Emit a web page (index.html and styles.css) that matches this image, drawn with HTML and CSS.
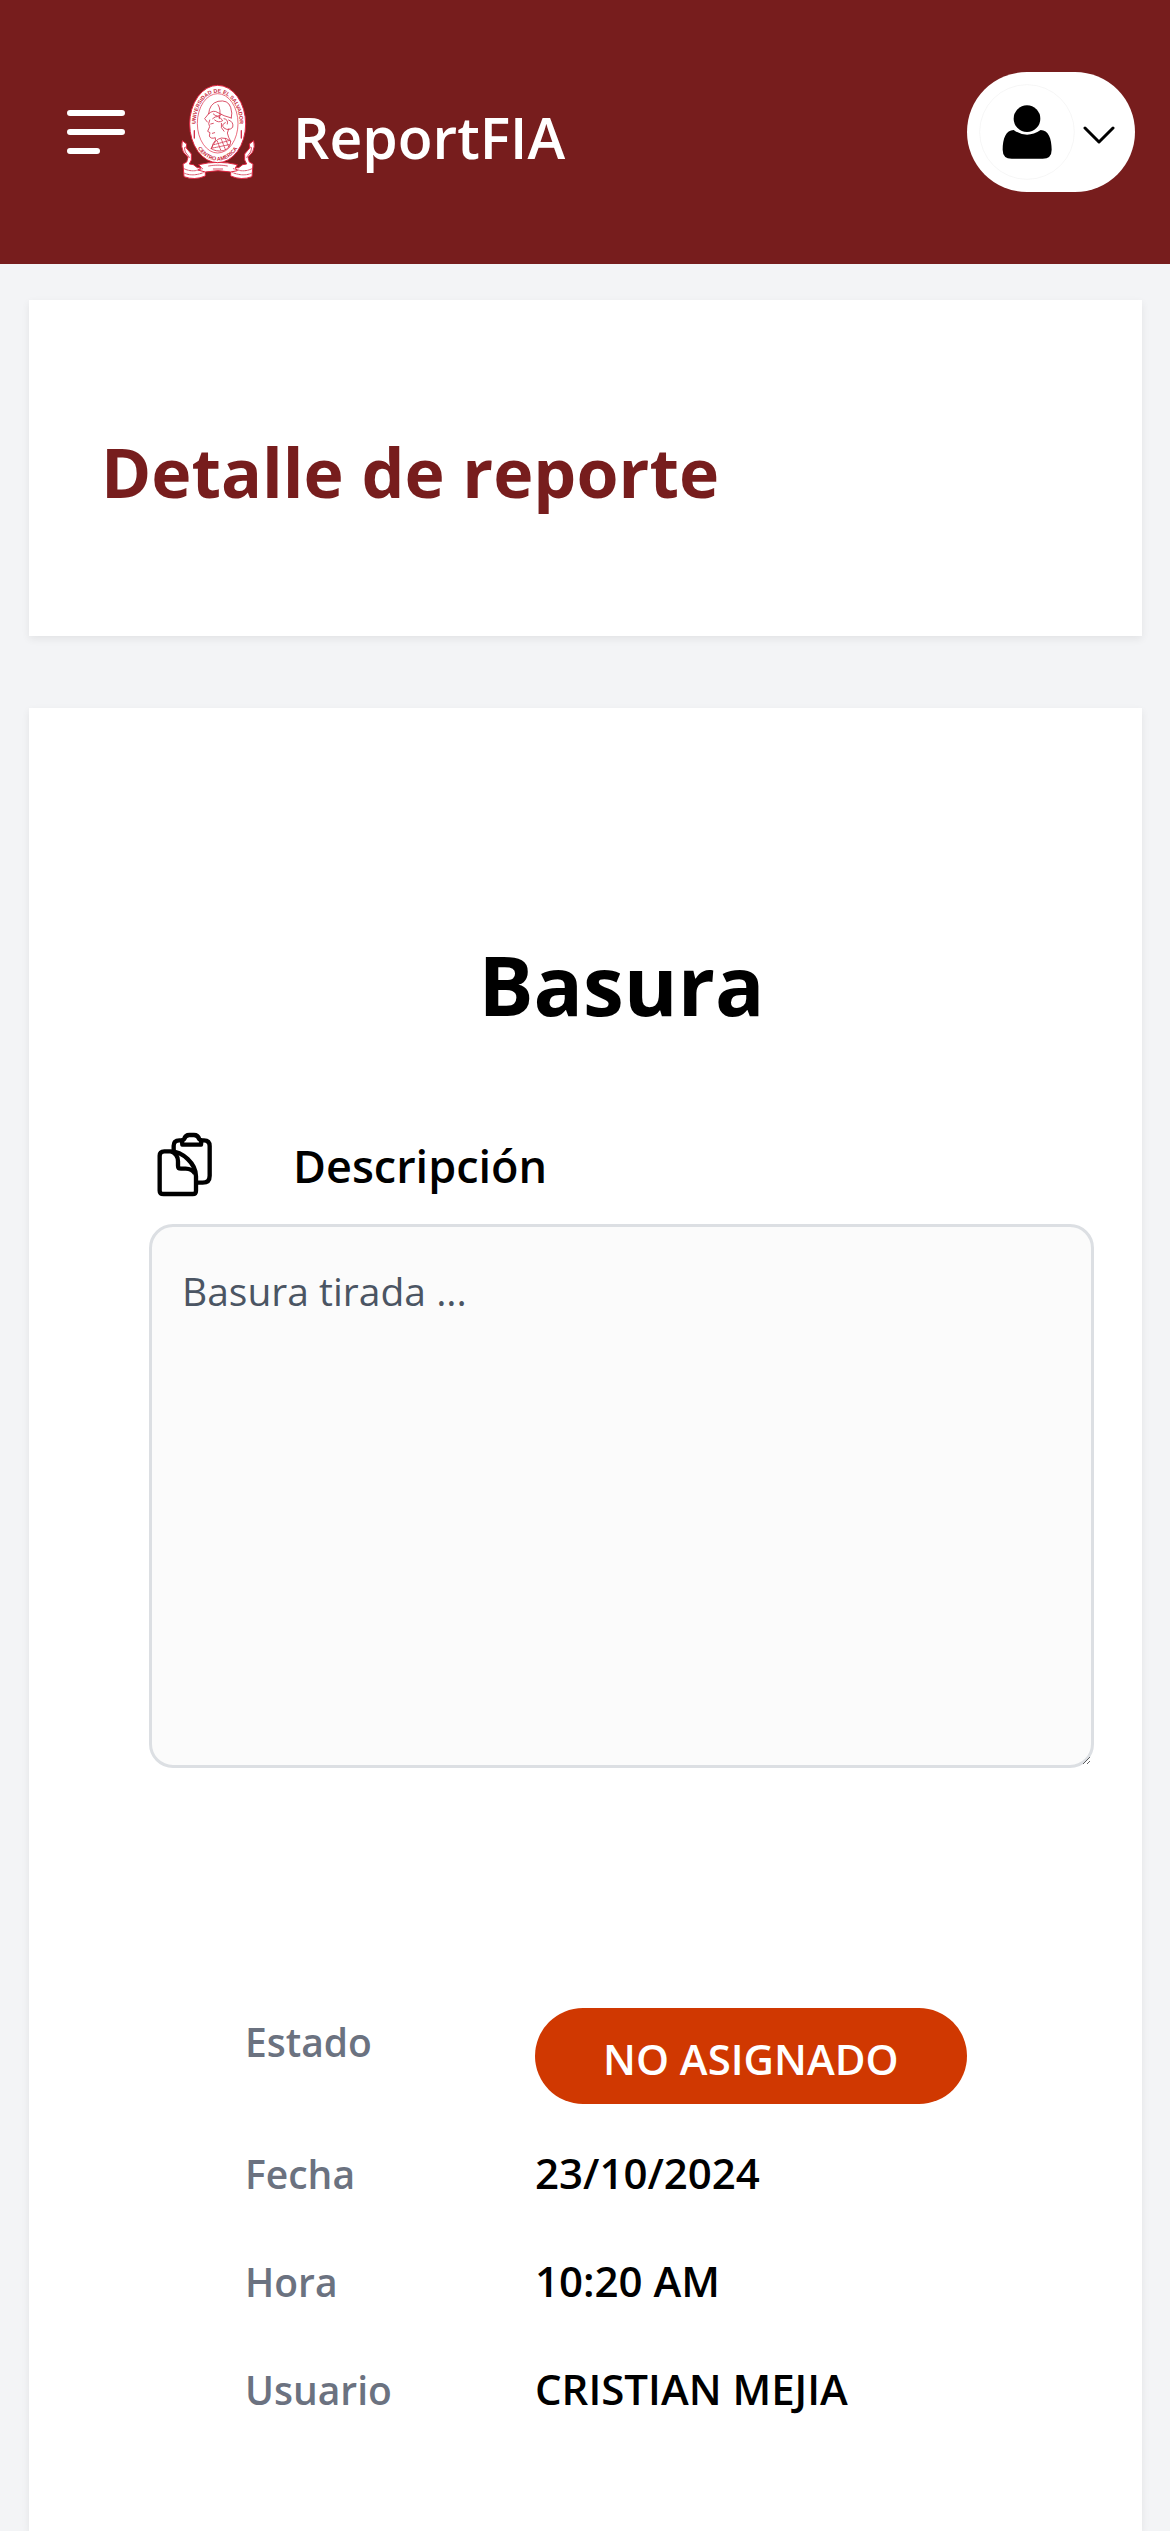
FILE: index.html
```html
<!DOCTYPE html>
<html lang="es">
<head>
<meta charset="utf-8">
<meta name="viewport" content="width=device-width, initial-scale=1">
<title>ReportFIA</title>
<link rel="stylesheet" href="styles.css">
</head>
<body>
<header class="topbar">
  <button class="menu-button" type="button" aria-label="Abrir menú">
    <svg class="menu-icon" viewBox="0 0 58 44" fill="none" stroke="currentColor" stroke-width="6" stroke-linecap="round" aria-hidden="true">
      <path d="M3 3H55M3 22H55M3 41H30"/>
    </svg>
  </button>
  <a class="brand" href="#">
    <svg class="crest" viewBox="63 45 222 282" aria-hidden="true">
      <g fill="#fff" stroke="#e0243f" stroke-width="3" stroke-linejoin="round">
        <path d="M67 212L80 222L79 234L94 252V270L88 282L100 284L112 293H136V318Q104 332 72 320L69 282L80 276L84 262L70 246Q62 230 67 212Z"/>
        <path d="M281 212L268 222L269 234L254 252V270L260 282L248 284L236 293H212V318Q244 332 276 320L279 282L268 276L264 262L278 246Q286 230 281 212Z"/>
        <path d="M116 284Q174 270 232 284L226 294L232 302L212 306Q174 298 136 306L114 300L124 293Z"/>
        <ellipse cx="173" cy="162" rx="84" ry="116"/>
        <ellipse cx="173" cy="160" rx="61" ry="89" stroke-width="2"/>
      </g>
      <g fill="none" stroke="#d3304a" stroke-width="2.5" stroke-linecap="round" stroke-linejoin="round">
        <path d="M78 232Q70 226 76 246L88 262M270 232Q278 226 272 246L260 262"/>
        <path d="M72 296Q88 304 106 302L128 296M74 310Q98 320 130 308M276 296Q260 304 242 302L220 296M274 310Q250 320 218 308" stroke-dasharray="5 3"/>
        <path d="M146 288Q174 283 202 288M160 297H188" stroke-dasharray="4 2"/>
        <path d="M103 182V204M244 182V204" stroke-width="4"/>
        <path d="M146 131Q148 101 174 94Q204 88 212 112Q218 130 214 144M146 131L134 146L142 156M146 131Q160 118 174 128Q190 138 214 144"/>
        <path d="M149 150Q143 162 149 170L143 184L150 188L148 198Q152 208 166 203Q170 210 160 220L154 236M206 176Q198 190 206 202L212 214"/>
        <path d="M174 104Q184 118 178 146M160 132Q172 144 184 134M158 146Q174 130 188 152Q176 160 164 150M192 146Q206 148 202 162M206 150Q222 156 218 172Q206 184 192 174Q182 164 196 158M184 160Q180 174 192 184"/>
        <path d="M152 162L160 160M157 190L164 188"/>
        <path d="M154 236Q164 208 184 204Q200 202 212 214Q212 234 190 242Q168 246 154 236Z"/>
        <path d="M162 224L206 212M158 234L208 224M172 214L182 240M184 208L196 238M196 206L206 230" stroke-dasharray="3 3"/>
      </g>
      <path id="ring-top" fill="none" d="M108 178A66 94 0 1 1 238 178"/>
      <path id="ring-bottom" fill="none" d="M98 200A80 110 0 0 0 248 200"/>
      <g class="crest-text">
        <text><textPath href="#ring-top" startOffset="50%" text-anchor="middle">UNIVERSIDAD DE EL SALVADOR</textPath></text>
        <text><textPath href="#ring-bottom" startOffset="50%" text-anchor="middle">CENTRO AMERICA</textPath></text>
      </g>
    </svg>
    <span class="brand-name">ReportFIA</span>
  </a>
  <button class="user-button" type="button" aria-label="Menú de usuario">
    <svg class="avatar" viewBox="118 102 288 288" aria-hidden="true">
      <circle cx="262" cy="246" r="142" fill="#fff" stroke="#f1f1f1" stroke-width="2"/>
      <circle cx="262" cy="206" r="40"/>
      <path d="M222 240Q262 268 303 240C326 240 336 266 336 299Q336 326 309 326H216Q189 326 189 299C189 266 199 240 222 240Z"/>
    </svg>
    <svg class="chevron" viewBox="0 0 32 24" fill="none" stroke="currentColor" stroke-width="3" stroke-linecap="round" stroke-linejoin="round" aria-hidden="true">
      <path d="M2 8L16 22L30 8"/>
    </svg>
  </button>
</header>
<main class="content">
  <section class="card title-card">
    <h1 class="page-title">Detalle de reporte</h1>
  </section>
  <section class="card report-card">
    <h2 class="report-title">Basura</h2>
    <div class="field-heading">
      <svg class="clipboard" viewBox="45 60 180 198" fill="none" stroke="#000" stroke-width="13" stroke-linejoin="round" aria-hidden="true">
        <path d="M101 117V104Q101 88 118 88H126M183 88H192Q209 88 209 105V194Q209 215 188 215H174"/>
        <path d="M127 101Q124 88 132 85Q136 72 148 72H162Q174 72 178 85Q186 88 183 101Z"/>
        <path d="M73 121H91C128 121 168 158 168 196V239Q168 249 158 249H71Q59 249 59 239V134Q59 121 73 121Z"/>
        <path d="M94 121Q114 130 114 151V164Q114 173 123 173H137Q156 173 165 188"/>
      </svg>
      <label class="field-label" for="descripcion">Descripción</label>
    </div>
    <textarea class="description" id="descripcion" readonly>Basura tirada ...</textarea>
    <dl class="details">
      <dt>Estado</dt><dd><span class="badge">NO ASIGNADO</span></dd>
      <dt>Fecha</dt><dd>23/10/2024</dd>
      <dt>Hora</dt><dd>10:20 AM</dd>
      <dt>Usuario</dt><dd>CRISTIAN MEJIA</dd>
    </dl>
  </section>
</main>
</body>
</html>
```
FILE: styles.css
```css
* { box-sizing: border-box; }
body {
  margin: 0;
  min-height: 100vh;
  display: flex;
  flex-direction: column;
  background: #f3f4f6;
  color: #000;
  font-family: "Segoe UI", "Open Sans", "Noto Sans", sans-serif;
  font-size: 42px;
  line-height: 60px;
}
h1, h2, dl, dd { margin: 0; }
button { border: 0; padding: 0; font: inherit; cursor: pointer; }
svg { display: block; flex: none; }

.topbar {
  display: flex;
  align-items: center;
  min-height: 264px;
  padding: 72px 35px 72px 67px;
  background: #771d1d;
  color: #fff;
}
.menu-button { background: none; color: inherit; }
.menu-icon { width: 58px; height: 44px; }
.brand {
  display: flex;
  align-items: center;
  gap: 38px;
  margin-left: 56px;
  color: inherit;
  text-decoration: none;
}
.crest { width: 74px; height: 94px; overflow: visible; }
.crest-text {
  fill: #c81e3a;
  font-family: "Liberation Sans", sans-serif;
  font-size: 16px;
  font-weight: 700;
}
.brand-name { font-size: 57px; line-height: 84px; font-weight: 600; padding-top: 10px; }
.user-button {
  display: flex;
  align-items: center;
  gap: 8px;
  height: 120px;
  margin-left: auto;
  padding: 0 20px 0 12px;
  border-radius: 60px;
  background: #fff;
  color: #000;
}
.avatar { width: 96px; height: 96px; }
.chevron { width: 32px; height: 24px; }

.content {
  flex: 1;
  display: flex;
  flex-direction: column;
  gap: 72px;
  padding: 36px 28px 0 29px;
}
.card { background: #fff; box-shadow: 0 3px 8px rgba(0, 0, 0, 0.07); }
.title-card { padding: 124px 72px 116px; }
.page-title { font-size: 68px; line-height: 96px; font-weight: 700; color: #771d1d; }
.report-card { flex: 1; padding: 216px 48px 96px 120px; }
.report-title { font-size: 82px; line-height: 120px; font-weight: 700; text-align: center; }
.field-heading {
  display: flex;
  align-items: center;
  gap: 78px;
  margin-top: 84px;
  padding-left: 6px;
}
.clipboard { width: 60px; height: 66px; }
.field-label { font-size: 45px; line-height: 68px; font-weight: 600; padding-top: 4px; }
.description {
  display: block;
  width: 100%;
  height: 544px;
  margin-top: 24px;
  padding: 34px 30px;
  border: 3px solid #dcdfe3;
  border-radius: 24px;
  background: #fbfbfb;
  color: #4b5563;
  font: inherit;
  font-size: 39px;
}
.details {
  display: grid;
  grid-template-columns: 290px 1fr;
  grid-auto-rows: minmax(72px, auto);
  row-gap: 36px;
  margin-top: 240px;
  padding-left: 96px;
  font-weight: 600;
}
.details dt { padding-top: 4px; font-size: 39px; color: #6b7280; }
.details dd { padding-top: 3px; }
.details dd:has(.badge) { padding-top: 0; }
.badge {
  display: inline-block;
  padding: 21px 68px 15px;
  border-radius: 48px;
  background: #d03801;
  color: #fff;
  vertical-align: top;
}
```
